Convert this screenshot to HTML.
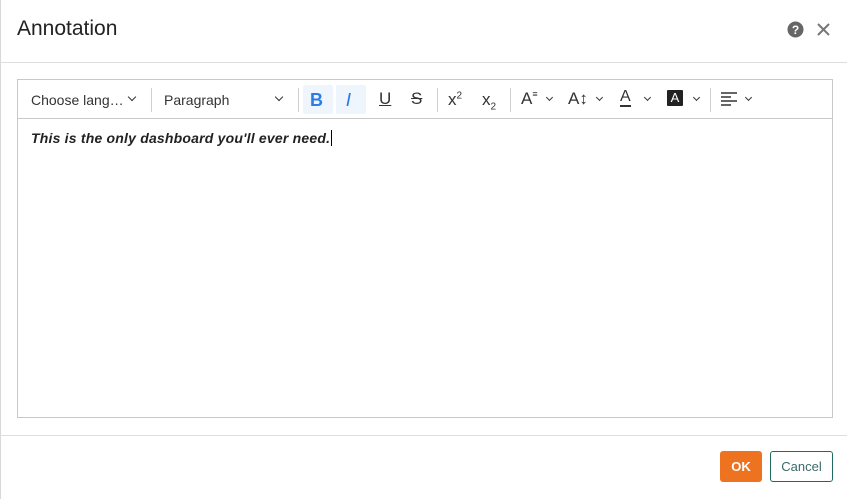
<!DOCTYPE html>
<html><head><style>
*{margin:0;padding:0;box-sizing:border-box}
body{width:847px;height:499px;background:#fff;font-family:"Liberation Sans",sans-serif;position:relative;overflow:hidden}
.abs{position:absolute}
.title{left:17px;top:17px;font-size:21px;color:#222}
.hl{left:0;width:847px;height:1px;background:#dedede}
.ed{left:17px;top:79px;width:816px;height:339px;border:1px solid #c8c8c8}
.tb{left:0;top:0;width:814px;height:39px;border-bottom:1px solid #c8c8c8}
.t{font-size:14px;color:#333;top:12px}
.sep{top:8px;width:1px;height:24px;background:#d0d0d0}
.chev{width:6px;height:6px;border-right:1.5px solid #333;border-bottom:1.5px solid #333;transform:rotate(45deg)}
.btnbg{top:5px;width:30px;height:29px;background:#eef5fd;border-radius:2px}
</style></head><body>
<div class="abs" style="left:0;top:0;width:1px;height:499px;background:#d8d8d8"></div>
<div class="abs title">Annotation</div>
<svg class="abs" style="left:787px;top:21px" width="17" height="17" viewBox="0 0 17 17"><circle cx="8.5" cy="8.5" r="8" fill="#666"/><text x="8.5" y="13" text-anchor="middle" font-family="Liberation Sans" font-weight="bold" font-size="12" fill="#fff">?</text></svg>
<svg class="abs" style="left:817px;top:23px" width="13" height="13" viewBox="0 0 13 13"><path d="M1 1L12 12M12 1L1 12" stroke="#777" stroke-width="2"/></svg>
<div class="abs hl" style="top:62px"></div>
<div class="abs ed">
 <div class="abs tb">
  <div class="abs t" style="left:13px">Choose lang…</div>
  <div class="abs chev" style="left:111px;top:14px"></div>
  <div class="abs sep" style="left:133px"></div>
  <div class="abs t" style="left:146px">Paragraph</div>
  <div class="abs chev" style="left:258px;top:14px"></div>
  <div class="abs sep" style="left:280px"></div>
  <div class="abs btnbg" style="left:285px"></div>
  <div class="abs" style="left:292px;top:10px;font-size:18px;font-weight:bold;color:#2d7be5">B</div>
  <div class="abs btnbg" style="left:318px"></div>
  <div class="abs" style="left:328px;top:10px;font-size:18px;font-style:italic;color:#2d7be5;font-family:'DejaVu Sans',sans-serif">I</div>
  <div class="abs" style="left:361px;top:9px;font-size:17px;color:#333;text-decoration:underline">U</div>
  <div class="abs" style="left:393px;top:9px;font-size:17px;color:#333;text-decoration:line-through">S</div>
  <div class="abs sep" style="left:419px"></div>
  <div class="abs" style="left:430px;top:10px;font-size:17px;color:#333">x<sup style="font-size:10px">2</sup></div>
  <div class="abs" style="left:464px;top:10px;font-size:17px;color:#333">x<sub style="font-size:10px">2</sub></div>
  <div class="abs sep" style="left:492px"></div>
  <div class="abs" style="left:503px;top:9px;font-size:17px;color:#333">A<span style="font-size:9px;vertical-align:top">≡</span></div>
  <div class="abs chev" style="left:529px;top:15px;width:5px;height:5px"></div>
  <div class="abs" style="left:550px;top:9px;font-size:17px;color:#333">A↕</div>
  <div class="abs chev" style="left:579px;top:15px;width:5px;height:5px"></div>
  <div class="abs" style="left:602px;top:9px;font-size:16px;color:#333;border-bottom:2px solid #333;line-height:16px">A</div>
  <div class="abs chev" style="left:627px;top:15px;width:5px;height:5px"></div>
  <div class="abs" style="left:649px;top:10px;width:16px;height:16px;background:#222;color:#fff;font-size:13px;text-align:center;line-height:16px;border-radius:1px">A</div>
  <div class="abs chev" style="left:676px;top:15px;width:5px;height:5px"></div>
  <div class="abs sep" style="left:692px"></div>
  <svg class="abs" style="left:703px;top:12px" width="16" height="14"><path d="M0 1H16M0 5H10M0 9H16M0 13H10" stroke="#333" stroke-width="1.5"/></svg>
  <div class="abs chev" style="left:728px;top:15px;width:5px;height:5px"></div>
 </div>
 <div class="abs" style="left:13px;top:50px;font-family:'Liberation Sans',sans-serif;font-weight:bold;font-style:italic;font-size:14px;color:#222;letter-spacing:0.2px">This is the only dashboard you'll ever need.<span style="border-left:1px solid #000;margin-left:1px"></span></div>
</div>
<div class="abs hl" style="top:435px"></div>
<div class="abs" style="left:720px;top:451px;width:42px;height:31px;background:#ee7320;border-radius:3px;color:#fff;font-size:13px;font-weight:bold;text-align:center;line-height:31px">OK</div>
<div class="abs" style="left:770px;top:451px;width:63px;height:31px;border:1px solid #1f6b63;border-radius:3px;color:#3b6b6b;font-size:13px;text-align:center;line-height:29px">Cancel</div>
</body></html>
